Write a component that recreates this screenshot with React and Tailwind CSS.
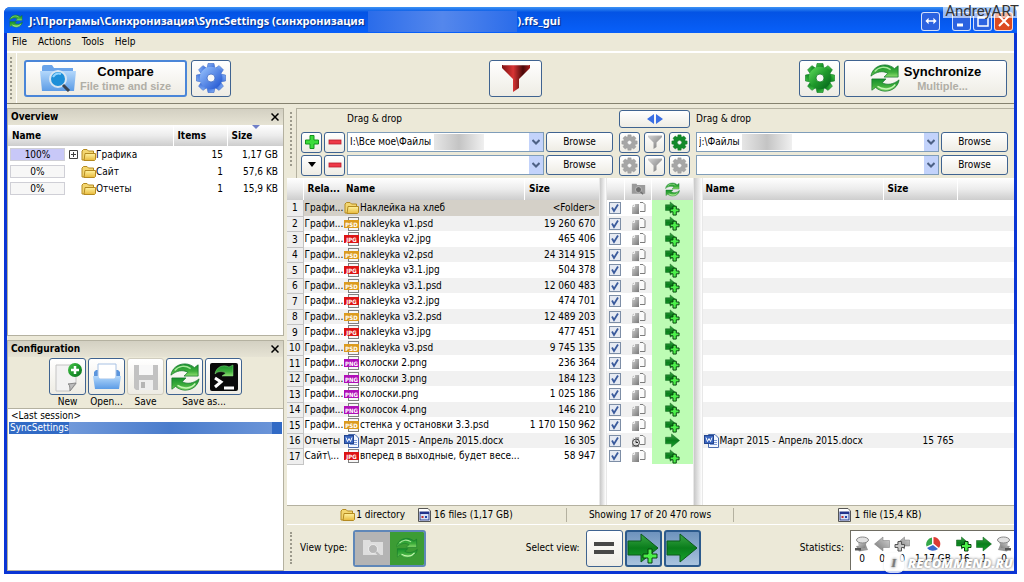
import { clsx } from 'clsx'

const FILES = [
  { rel: 'Графи...', kind: 'folder', name: 'Наклейка на хлеб', size: '<Folder>' },
  { rel: 'Графи...', kind: 'psd', name: 'nakleyka v1.psd', size: '19 260 670' },
  { rel: 'Графи...', kind: 'jpg', name: 'nakleyka v2.jpg', size: '465 406' },
  { rel: 'Графи...', kind: 'psd', name: 'nakleyka v2.psd', size: '24 314 915' },
  { rel: 'Графи...', kind: 'jpg', name: 'nakleyka v3.1.jpg', size: '504 378' },
  { rel: 'Графи...', kind: 'psd', name: 'nakleyka v3.1.psd', size: '12 060 483' },
  { rel: 'Графи...', kind: 'jpg', name: 'nakleyka v3.2.jpg', size: '474 701' },
  { rel: 'Графи...', kind: 'psd', name: 'nakleyka v3.2.psd', size: '12 489 203' },
  { rel: 'Графи...', kind: 'jpg', name: 'nakleyka v3.jpg', size: '477 451' },
  { rel: 'Графи...', kind: 'psd', name: 'nakleyka v3.psd', size: '9 745 135' },
  { rel: 'Графи...', kind: 'png', name: 'колоски 2.png', size: '236 364' },
  { rel: 'Графи...', kind: 'png', name: 'колоски 3.png', size: '184 123' },
  { rel: 'Графи...', kind: 'png', name: 'колоски.png', size: '1 025 186' },
  { rel: 'Графи...', kind: 'png', name: 'колосок 4.png', size: '146 210' },
  { rel: 'Графи...', kind: 'psd', name: 'стенка у остановки 3.3.psd', size: '1 170 150 962' },
  { rel: 'Отчеты', kind: 'doc', name: 'Март 2015 - Апрель 2015.docx', size: '16 305', right: '15 765' },
  { rel: 'Сайт\\...', kind: 'jpg', name: 'вперед в выходные, будет весе...', size: '58 947' },
]

const OVERVIEW = [
  { percent: '100%', name: 'Графика', items: 15, size: '1,17 GB', full: true },
  { percent: '0%', name: 'Сайт', items: 1, size: '57,6 KB' },
  { percent: '0%', name: 'Отчеты', items: 1, size: '15,9 KB' },
]

const BADGES = { psd: '#dc9b1e', jpg: '#dd1414', png: '#b010b8' }

const BTN = 'flex items-center justify-center rounded-[3px] border border-[#3f6390] bg-linear-to-b from-white to-[#eeece4]'
const HEAD = 'bg-linear-to-b from-white via-[#ececec] to-[#cdcdcd] font-bold text-black'

/* ---------- icons ---------- */

function Gradients() {
  return (
    <svg className="absolute size-0" aria-hidden="true">
      <defs>
        <linearGradient id="green" x1="0" y1="0" x2="1" y2="1">
          <stop offset="0" stopColor="#4cc84e" />
          <stop offset="0.5" stopColor="#1f9a2c" />
          <stop offset="1" stopColor="#0c7220" />
        </linearGradient>
        <linearGradient id="lime" x1="0" y1="0" x2="0" y2="1">
          <stop offset="0" stopColor="#16902c" />
          <stop offset="0.6" stopColor="#3fae3c" />
          <stop offset="1" stopColor="#8fe070" />
        </linearGradient>
        <linearGradient id="arrow" x1="0" y1="0" x2="0" y2="1">
          <stop offset="0" stopColor="#3ca746" />
          <stop offset="0.5" stopColor="#0a7d1c" />
          <stop offset="1" stopColor="#17a52c" />
        </linearGradient>
        <linearGradient id="blue" x1="0" y1="0" x2="1" y2="1">
          <stop offset="0" stopColor="#86b2f6" />
          <stop offset="1" stopColor="#2f62d6" />
        </linearGradient>
        <linearGradient id="grey" x1="0" y1="0" x2="1" y2="1">
          <stop offset="0" stopColor="#d2d2d2" />
          <stop offset="1" stopColor="#777777" />
        </linearGradient>
        <linearGradient id="red" x1="0" y1="0" x2="1" y2="0">
          <stop offset="0" stopColor="#7c1010" />
          <stop offset="0.4" stopColor="#d83434" />
          <stop offset="0.75" stopColor="#4a0808" />
          <stop offset="1" stopColor="#a81c1c" />
        </linearGradient>
        <linearGradient id="sky" x1="0" y1="0" x2="0" y2="1">
          <stop offset="0" stopColor="#b4d8fb" />
          <stop offset="1" stopColor="#5c9ce6" />
        </linearGradient>
        <linearGradient id="gold" x1="0" y1="0" x2="0" y2="1">
          <stop offset="0" stopColor="#fff3a0" />
          <stop offset="1" stopColor="#e8b93c" />
        </linearGradient>
      </defs>
    </svg>
  )
}

function SyncIcon({ className }) {
  return (
    <svg viewBox="0 0 32 32" className={className}>
      <g fill="url(#lime)" stroke="#12752a" strokeWidth="0.8" strokeLinejoin="round">
        <path d="M1 14C2 7 8 2 16 2C20 2 24 4 26 6L30 3V15H15L19 11C14 8 7 9 1 14Z" />
        <path d="M31 18C30 25 24 30 16 30C12 30 8 28 6 26L2 29V17H17L13 21C18 24 25 23 31 18Z" />
      </g>
      <path d="M5 9C9 4 16 3 22 7" fill="none" stroke="#a8e89a" strokeWidth="1.500" />
      <path d="M8 25C14 29 22 29 27 23" fill="none" stroke="#c5f5b4" strokeWidth="1.500" />
    </svg>
  )
}

function GearIcon({ fill, stroke, className }) {
  return (
    <svg viewBox="0 0 32 32" className={className}>
      <g fill={fill} stroke={stroke} strokeWidth="0.6">
        {[0, 45, 90, 135, 180, 225, 270, 315].map((deg) => (
          <path key={deg} d="M12 7L13 1.500H19L20 7Z" transform={`rotate(${deg} 16 16)`} />
        ))}
      </g>
      <circle cx="16" cy="16" r="7.500" fill="none" stroke={fill} strokeWidth="7.500" />
      <circle cx="16" cy="16" r="4" fill="#f8f8f8" stroke={stroke} strokeWidth="0.8" />
    </svg>
  )
}

function FunnelIcon({ fill, className }) {
  return (
    <svg viewBox="0 0 28 28" className={className}>
      <path d="M0 1H28V4L17 15V24L11 28V15L0 4Z" fill={fill} />
      <path d="M1 1.500H27" stroke="#ffffff" strokeOpacity="0.25" />
    </svg>
  )
}

function FolderIcon({ className }) {
  return (
    <svg viewBox="0 0 15 14" className={className}>
      <path d="M1 12V3L2.500 1.500H6L7.500 3H12.500V12Z" fill="#f3d670" stroke="#b48a20" />
      <path d="M3 12.500L4 5.500H14.500V11.500L13.500 12.500Z" fill="url(#gold)" stroke="#b48a20" />
    </svg>
  )
}

function CompareIcon({ className }) {
  return (
    <svg viewBox="0 0 36 28" className={className}>
      <path d="M2 27V3Q2 1 4 1H12L14 4H33V27Z" fill="#6aa4ea" />
      <path d="M0 7H36L34 27H2Z" fill="url(#sky)" />
      <circle cx="18" cy="15" r="8" fill="#1d8fd8" stroke="#d8e6f2" strokeWidth="2" />
      <path d="M13 13Q16 8 21 10" stroke="#8ed4ff" strokeWidth="2" fill="none" />
      <path d="M23 21L29 27" stroke="#3a4350" strokeWidth="3" />
    </svg>
  )
}

function ArrowIcon({ plus, small, flip, fill = 'url(#arrow)', stroke = '#0b5a18', className }) {
  return (
    <svg viewBox="0 0 32 32" className={className}>
      <g transform={flip ? 'translate(32 0) scale(-1 1)' : undefined}>
        {small ? (
          <path d="M1 8H11V2L25 14L11 26V20H1Z" fill={fill} stroke={stroke} strokeLinejoin="round" />
        ) : (
          <path d="M1 9H14V2L31 16L14 30V23H1Z" fill={fill} stroke={stroke} strokeLinejoin="round" />
        )}
        {plus && (
          <path
            d={small ? 'M17 11H24V17H30V23H24V30H17V23H11V17H17Z' : 'M21 17H25V22H30V26H25V31H21V26H16V22H21Z'}
            fill={flip ? '#c8c8c8' : '#4df04a'}
            stroke={flip ? '#555555' : '#04420c'}
            strokeWidth={small ? 2 : 1}
          />
        )}
      </g>
    </svg>
  )
}

function FileIcon({ kind }) {
  if (kind === 'folder') return <FolderIcon className="h-[14px] w-[15px] shrink-0" />
  if (kind === 'doc') {
    return (
      <svg viewBox="0 0 15 14" className="h-[14px] w-[15px] shrink-0">
        <path d="M4.500 .5H11L14.500 4V13.500H4.500Z" fill="#f4f8ff" stroke="#4a6cae" />
        <path d="M9 6.500H13M9 8.500H13M6 10.500H13" stroke="#7d9ad4" />
        <rect x="0.500" y="1.500" width="9" height="8" fill="#3a66c0" stroke="#24458e" />
        <path d="M2 3.500L3.500 7.500L5 4.500L6.500 7.500L8 3.500" fill="none" stroke="#ffffff" />
      </svg>
    )
  }
  return (
    <svg viewBox="0 0 15 14" className="h-[14px] w-[15px] shrink-0">
      <rect x="4.500" y="0.500" width="10" height="13" fill="#f6f6f6" stroke="#808080" />
      <rect x="0" y="3" width="15" height="8" fill={BADGES[kind]} />
      <text x="7.500" y="9.500" textAnchor="middle" fontSize="6" fontWeight="bold" fill="#ffffff">
        {kind.toUpperCase()}
      </text>
    </svg>
  )
}

function CategoryIcon({ newer }) {
  return (
    <svg viewBox="0 0 15 14" className="mx-auto block h-[14px] w-[15px]">
      <path d="M9 1.500H12L14 3.500V10.500H9" fill="#fafafa" stroke="#7c7c7c" />
      <path d="M1 5L3.500 3H8V13H1Z" fill="url(#grey)" />
      <path d="M1.500 5.500H3.500V3" fill="none" stroke="#f0f0f0" />
      {newer && <circle cx="5" cy="8.500" r="3.500" fill="#d8d8d8" stroke="#444444" />}
      {newer && <path d="M5 6.500V8.500H7" stroke="#222222" fill="none" />}
    </svg>
  )
}

function CameraIcon({ fill, lens, className }) {
  return (
    <svg viewBox="0 0 22 18" className={className}>
      <path d="M1 4V1H8L9 3H21V16H1Z" fill={fill} />
      <circle cx="11" cy="10" r="4.500" fill={lens} stroke="#ffffff" strokeOpacity="0.6" />
      <path d="M14 13L18 17" stroke={lens} strokeWidth="2" />
    </svg>
  )
}

function CalendarIcon() {
  return (
    <svg viewBox="0 0 13 14" className="h-[14px] w-[13px] shrink-0">
      <path d="M.5 .5H10L12.500 3V13.500H.5Z" fill="#ffffff" stroke="#555555" />
      <rect x="2" y="4" width="9" height="8" fill="#d7e1f5" stroke="#2b3f8c" />
      <rect x="2" y="4" width="9" height="2" fill="#22338c" />
      <rect x="3.500" y="8" width="2" height="2" fill="#c23030" />
      <rect x="7" y="8" width="2" height="2" fill="#2244aa" />
    </svg>
  )
}

function NewIcon() {
  return (
    <svg viewBox="0 0 30 30" className="size-[30px]">
      <path d="M3 3H23V22L17 29H3Z" fill="#f2f2f2" stroke="#c4c4c4" />
      <path d="M23 21L17 29Q17 22 15 22Z" fill="#bdbdbd" stroke="#888888" />
      <circle cx="22" cy="8" r="7" fill="url(#green)" />
      <path d="M22 4V12M18 8H26" stroke="#ffffff" strokeWidth="2.500" />
    </svg>
  )
}

function OpenIcon() {
  return (
    <svg viewBox="0 0 30 30" className="size-[30px]">
      <path d="M2 10L4 8H26L28 10V15H2Z" fill="#5b95dd" />
      <path d="M6 2H24V17H6Z" fill="#ffffff" stroke="#a8c2e4" />
      <path d="M1 14H6L8 17H22L24 14H29L27 27H3Z" fill="url(#sky)" />
    </svg>
  )
}

function SaveIcon() {
  return (
    <svg viewBox="0 0 30 30" className="size-[30px]">
      <path d="M3 3H27V28H5L3 26Z" fill="#c2c2c2" />
      <rect x="8" y="3" width="14" height="10" fill="#f8f8f8" />
      <rect x="8" y="18" width="14" height="10" fill="#eeeeee" />
      <rect x="10" y="20" width="4" height="6" fill="#b5b5b5" />
    </svg>
  )
}

function BatchIcon() {
  return (
    <svg viewBox="0 0 30 30" className="size-[30px]">
      <rect x="1" y="1" width="28" height="28" rx="2" fill="#0a0a0a" />
      <path d="M6 12C7 5 14 2 20 5L24 3V14H13L17 11C13 9 9 9 6 12Z" fill="url(#lime)" stroke="#7fd47a" strokeWidth="0.500" />
      <path d="M6 16L12 20L6 25" fill="none" stroke="#ffffff" strokeWidth="3" />
      <path d="M15 26H25" stroke="#ffffff" strokeWidth="3" />
    </svg>
  )
}

function TrashIcon({ flip }) {
  return (
    <svg viewBox="0 0 16 16" className={clsx('size-4', flip && '-scale-x-100')}>
      <path d="M2 10L12 9L14 14L5 15.500Z" fill="#9a9a9a" />
      <path d="M1 12H7V14.500H1Z" fill="#555555" />
      <path d="M4 6L13 5L11 12H5Z" fill="url(#grey)" />
      <ellipse cx="8.500" cy="4" rx="6" ry="3" fill="#e2e2e2" stroke="#8a8a8a" />
    </svg>
  )
}

function PieIcon() {
  return (
    <svg viewBox="0 0 16 16" className="size-4">
      <path d="M8.500 7.500V1A7 7 0 0 1 14 12Z" fill="#dc3a34" />
      <path d="M8 9L13 13A7.500 7 0 0 1 2 12Z" fill="#3a68cc" />
      <path d="M7 8L1.500 10.500A7 7 0 0 1 7 1.500Z" fill="#36a84a" />
    </svg>
  )
}

/* ---------- window parts ---------- */

function TitleBar() {
  const cap = 'flex size-[19px] items-center justify-center rounded-[3px] border border-white/80'
  return (
    <header className="flex h-[26px] shrink-0 items-center rounded-t-md bg-linear-to-b from-[#3d93f5] via-[#0453e4] via-20% to-[#0860fa] pt-0.5 pr-1 pl-[5px]">
      <SyncIcon className="mr-1.5 size-[14px]" />
      <h1 className="flex items-center font-[Noto_Sans] text-[11px] font-bold whitespace-pre text-white [text-shadow:1px_1px_1px_#0a2a80]">
        J:\Програмы\Синхронизация\SyncSettings (синхронизация
        <span className="ml-1 h-[21px] w-[149px] bg-linear-to-r from-[#2a6cea] via-[#5487ec] to-[#2a6cea]" />
        ).ffs_gui
      </h1>
      <div className="ml-auto flex gap-0.5">
        <button type="button" aria-label="Move" className={clsx(cap, 'mr-2.5 bg-[#2b62e0]')}>
          <svg viewBox="0 0 14 10" className="h-[8px] w-[12px]">
            <path d="M0 5L4 1V4H10V1L14 5L10 9V6H4V9Z" fill="#ffffff" />
          </svg>
        </button>
        <button type="button" aria-label="Minimize" className={clsx(cap, 'bg-[#2b62e0]')}>
          <svg viewBox="0 0 14 14" className="size-[14px]"><path d="M2 11H8" stroke="#ffffff" strokeWidth="3" /></svg>
        </button>
        <button type="button" aria-label="Maximize" className={clsx(cap, 'bg-[#2b62e0]')}>
          <svg viewBox="0 0 14 14" className="size-[14px]"><path d="M2 3H12V12H2ZM2 4H12" fill="none" stroke="#ffffff" strokeWidth="1.500" /></svg>
        </button>
        <button type="button" aria-label="Close" className={clsx(cap, 'bg-[#dc4a20]')}>
          <svg viewBox="0 0 14 14" className="size-[14px]"><path d="M2 2L12 12M12 2L2 12" stroke="#ffffff" strokeWidth="2" /></svg>
        </button>
      </div>
    </header>
  )
}

function Grip({ className }) {
  return <div className={clsx('w-0 shrink-0 border-l-2 border-dotted border-[#9c9a8c]', className)} />
}

function Toolbar() {
  return (
    <div className="flex h-[53px] shrink-0 border-t-2 border-b border-t-white border-b-[#85826f] pl-[3px]">
      <Grip className="my-1" />
      <div className="ml-1 grid flex-1 grid-cols-[1fr_auto_1fr] items-center border-l border-white px-[7px]">
        <div className="flex gap-1">
          <button type="button" className={clsx(BTN, 'h-[37px] w-[163px] gap-1 border-2 border-[#4a86d8]')}>
            <CompareIcon className="h-[28px] w-[36px]" />
            <span className="flex flex-col items-center font-[Liberation_Sans] font-bold">
              <span className="text-[13px] leading-4">Compare</span>
              <span className="text-[11px] leading-3 text-[#b0aea6]">File time and size</span>
            </span>
          </button>
          <button type="button" aria-label="Comparison settings" className={clsx(BTN, 'h-[37px] w-[40px]')}>
            <GearIcon fill="url(#blue)" stroke="#3a68c8" className="size-[32px]" />
          </button>
        </div>
        <button type="button" aria-label="Filter" className={clsx(BTN, 'h-[37px] w-[53px]')}>
          <FunnelIcon fill="url(#red)" className="size-[28px]" />
        </button>
        <div className="flex justify-end gap-1">
          <button type="button" aria-label="Synchronization settings" className={clsx(BTN, 'h-[37px] w-[41px]')}>
            <GearIcon fill="url(#green)" stroke="#0d7a20" className="size-[32px]" />
          </button>
          <button type="button" className={clsx(BTN, 'h-[37px] w-[163px] gap-1')}>
            <SyncIcon className="size-[30px]" />
            <span className="flex flex-col items-center font-[Liberation_Sans] font-bold">
              <span className="text-[13px] leading-4">Synchronize</span>
              <span className="text-[11px] leading-3 text-[#b0aea6]">Multiple...</span>
            </span>
          </button>
        </div>
      </div>
    </div>
  )
}

function Caption({ children }) {
  return (
    <div className="flex h-4 shrink-0 items-center justify-between bg-linear-to-b from-[#d3d0c2] to-[#e6e3d4] pr-1 pl-[3px]">
      <h2 className="font-bold">{children}</h2>
      <button type="button" aria-label={`Close ${children}`}>
        <svg viewBox="0 0 8 8" className="size-2"><path d="M.5 .5L7.500 7.500M7.500 .5L.5 7.500" stroke="#000000" strokeWidth="1.500" /></svg>
      </button>
    </div>
  )
}

function Overview() {
  return (
    <section className="flex h-[228px] shrink-0 flex-col border border-[#b4b1a0] bg-white">
      <Caption>Overview</Caption>
      <table className="w-full table-fixed border-collapse">
        <thead>
          <tr className={clsx(HEAD, 'h-[21px] text-left')}>
            <th className="pl-1">Name</th>
            <th className="w-[54px] border-l border-white pl-1">Items</th>
            <th className="relative w-[56px] border-l border-white pl-1">
              Size
              <svg viewBox="0 0 8 4" className="absolute top-0 left-6 h-1 w-2"><path d="M0 0H8L4 4Z" fill="#6f7fc8" /></svg>
            </th>
          </tr>
        </thead>
        <tbody>
          {OVERVIEW.map((row) => (
            <tr key={row.name} className="h-[17px]">
              <td>
                <div className="flex items-center pl-0.5">
                  <span className={clsx('h-[13px] w-[55px] border border-[#cfcfd6] text-center leading-[11px]', row.full ? 'bg-[#c8c8f8]' : 'bg-[#f7f7f7]')}>
                    {row.percent}
                  </span>
                  <span className="mx-[3px] flex size-[10px] items-center justify-center">
                    {row.full && (
                      <svg viewBox="0 0 9 9" className="size-[9px]"><path d="M.5 .5H8.500V8.500H.5ZM2 4.500H7M4.500 2V7" fill="none" stroke="#404040" /></svg>
                    )}
                  </span>
                  <FolderIcon className="h-[14px] w-[15px]" />
                  {row.name}
                </div>
              </td>
              <td className="pr-1 text-right">{row.items}</td>
              <td className="pr-[5px] text-right">{row.size}</td>
            </tr>
          ))}
        </tbody>
      </table>
    </section>
  )
}

function Configuration() {
  const tools = [
    { label: 'New', buttons: [['New', <NewIcon />]] },
    { label: 'Open...', buttons: [['Open', <OpenIcon />]] },
    { label: 'Save', buttons: [['Save', <SaveIcon />]], disabled: true },
    { label: 'Save as...', buttons: [['Save as sync', <SyncIcon className="size-[30px]" />], ['Save as batch', <BatchIcon />]] },
  ]
  return (
    <section className="flex min-h-0 flex-1 flex-col border border-[#b4b1a0]">
      <Caption>Configuration</Caption>
      <div className="flex justify-center gap-0.5 pt-px">
        {tools.map((tool) => (
          <div key={tool.label} className="flex flex-col items-center">
            <div className="flex gap-0.5">
              {tool.buttons.map(([name, icon]) => (
                <button
                  key={name}
                  type="button"
                  aria-label={name}
                  disabled={tool.disabled}
                  className={clsx(BTN, 'size-[37px]', tool.disabled && 'border-[#d0cdbf]')}
                >
                  {icon}
                </button>
              ))}
            </div>
            <span className="leading-[13px]">{tool.label}</span>
          </div>
        ))}
      </div>
      <ul className="flex-1 border-t border-[#b4b1a0] bg-white px-px pt-px">
        <li className="h-3 pl-0.5 leading-3">&lt;Last session&gt;</li>
        <li className="flex h-3 items-center bg-[#316ac5] pl-px leading-3 text-white">
          SyncSettings
          <span className="mr-2.5 h-3 flex-1 bg-linear-to-r from-[#7099da] via-[#4a7ccc] to-[#6a94d8]" />
        </li>
      </ul>
    </section>
  )
}

function FolderSelect({ id, label, value }) {
  return (
    <div className="relative min-w-0 flex-1">
      <select
        id={id}
        aria-label={label}
        defaultValue={value}
        className="h-5 w-full appearance-none border border-[#7f9db9] bg-white pl-0.5 leading-4"
      >
        <option value={value}>{value}</option>
      </select>
      {value && (
        <span className={clsx('absolute top-0.5 h-4 w-[50px] bg-linear-to-r from-[#e6e6e6] via-[#c4c4c4] to-[#f0f0f0]', id === 'left1' ? 'left-[87px]' : 'left-[46px]')} />
      )}
      <span className="pointer-events-none absolute top-px right-px flex h-[18px] w-[14px] items-center justify-center bg-[#c3d3fb]">
        <svg viewBox="0 0 8 6" className="h-1.5 w-2"><path d="M.5 1L4 4.500L7.500 1" fill="none" stroke="#4d6185" strokeWidth="2" /></svg>
      </span>
    </div>
  )
}

function Browse() {
  return (
    <button type="button" className={clsx(BTN, 'h-5 w-[67px]')}>Browse</button>
  )
}

function Minus() {
  return (
    <svg viewBox="0 0 14 14" className="size-[14px]"><rect x="1" y="5" width="12" height="4" fill="#ee3a48" stroke="#b81c2c" strokeWidth="0.800" /></svg>
  )
}

function FolderPairs() {
  const small = clsx(BTN, 'size-[21px]')
  return (
    <div className="flex h-[70px] shrink-0 pl-[3px]">
      <Grip className="mt-1 mb-3" />
      <div className="ml-1 grid flex-1 grid-cols-[1fr_71px_1fr] grid-rows-[20px_20px_20px] items-center gap-x-1.5 gap-y-[3px] border-t border-l border-[#b4b1a0] pr-1.5 pl-1">
        <label htmlFor="left1" className="pl-[46px]">Drag &amp; drop</label>
        <button type="button" aria-label="Swap sides" className={clsx(BTN, 'h-[18px] w-full')}>
          <svg viewBox="0 0 16 10" className="h-[10px] w-4"><path d="M7 0V10L0 5ZM9 0V10L16 5Z" fill="#3b6fe4" /></svg>
        </button>
        <label htmlFor="right1">Drag &amp; drop</label>

        <div className="flex items-center gap-0.5">
          <button type="button" aria-label="Add folder pair" className={small}>
            <svg viewBox="0 0 14 14" className="size-[14px]"><path d="M5 .5H9V5H13.500V9H9V13.500H5V9H.5V5H5Z" fill="#3ddc3a" stroke="#15931c" /></svg>
          </button>
          <button type="button" aria-label="Remove folder pair 1" className={small}><Minus /></button>
          <FolderSelect id="left1" value={'I:\\Все мое\\Файлы'} />
          <Browse />
        </div>
        <div className="flex justify-between">
          <button type="button" aria-label="Local comparison settings" className={small}><GearIcon fill="#a6a6a6" stroke="#8a8a8a" className="size-[17px]" /></button>
          <button type="button" aria-label="Local filter" className={small}><FunnelIcon fill="url(#grey)" className="size-[14px]" /></button>
          <button type="button" aria-label="Local synchronization settings" className={small}><GearIcon fill="#138a2a" stroke="#0d6a1c" className="size-[17px]" /></button>
        </div>
        <div className="flex items-center gap-0.5">
          <FolderSelect id="right1" value={'j:\\Файлы'} />
          <Browse />
        </div>

        <div className="flex items-center gap-0.5">
          <button type="button" aria-label="More" className={small}>
            <svg viewBox="0 0 10 6" className="h-1.5 w-2.5"><path d="M1 0H9L5 5Z" fill="#000000" /></svg>
          </button>
          <button type="button" aria-label="Remove folder pair 2" className={small}><Minus /></button>
          <FolderSelect id="left2" label="Left folder 2" value="" />
          <Browse />
        </div>
        <div className="flex justify-between">
          <button type="button" aria-label="Pair 2 comparison settings" className={small}><GearIcon fill="#a6a6a6" stroke="#8a8a8a" className="size-[17px]" /></button>
          <button type="button" aria-label="Pair 2 filter" className={small}><FunnelIcon fill="url(#grey)" className="size-[14px]" /></button>
          <button type="button" aria-label="Pair 2 synchronization settings" className={small}><GearIcon fill="#a6a6a6" stroke="#8a8a8a" className="size-[17px]" /></button>
        </div>
        <div className="flex items-center gap-0.5">
          <FolderSelect id="right2" label="Right folder 2" value="" />
          <Browse />
        </div>
      </div>
    </div>
  )
}

function LeftGrid() {
  return (
    <table className="w-full table-fixed border-collapse whitespace-nowrap">
      <thead>
        <tr className={clsx(HEAD, 'h-[22px] text-left')}>
          <th className="w-[16px]" aria-label="Row" />
          <th className="w-[39px] border-l border-white pl-1">Rela...</th>
          <th className="pl-1">Name</th>
          <th className="w-[74px] border-l border-white pl-1">Size</th>
        </tr>
      </thead>
      <tbody>
        {FILES.map((file, i) => (
          <tr key={file.name} className={clsx('odd:h-4 even:h-[15px]', i === 0 ? 'bg-[#d4d0c8]' : 'even:bg-[#f1f1f1]')}>
            <td className="border-r border-b border-[#c4c4c4] bg-[#eeeeee] text-center leading-[13px]">{i + 1}</td>
            <td className="pl-px leading-[14px]">{file.rel}</td>
            <td>
              <div className="flex items-center gap-px pl-0.5 leading-[14px]">
                <FileIcon kind={file.kind} />
                {file.name}
              </div>
            </td>
            <td className="pr-[3px] text-right leading-[14px]">{file.size}</td>
          </tr>
        ))}
      </tbody>
    </table>
  )
}

function MiddleGrid() {
  return (
    <table className="w-full table-fixed border-collapse">
      <thead>
        <tr className={clsx(HEAD, 'h-[22px]')}>
          <th className="w-[18px]" aria-label="Selected" />
          <th aria-label="Category" className="border-l border-white">
            <CameraIcon fill="#9a9a9a" lens="#6f6f6f" className="mx-auto h-[12px] w-[15px]" />
          </th>
          <th aria-label="Action" className="w-[41px] border-l border-white">
            <SyncIcon className="mx-auto size-[15px]" />
          </th>
        </tr>
      </thead>
      <tbody>
        {FILES.map((file) => (
          <tr key={file.name} className="odd:h-4 even:h-[15px] even:bg-[#f1f1f1]">
            <td>
              <div className="ml-0.5 grid size-3">
                <input
                  type="checkbox"
                  defaultChecked
                  aria-label={file.name}
                  className="col-start-1 row-start-1 size-3 appearance-none border border-[#7d8ea6] bg-[#e6eaf2]"
                />
                <svg viewBox="0 0 12 12" className="pointer-events-none col-start-1 row-start-1 size-3">
                  <path d="M3 5.500L5 9L9 2.500" fill="none" stroke="#3a5a9c" strokeWidth="1.800" />
                </svg>
              </div>
            </td>
            <td><CategoryIcon newer={Boolean(file.right)} /></td>
            <td className="bg-[#bdfcb4]">
              <ArrowIcon plus={!file.right} small={!file.right} className="mx-auto block size-[15px]" />
            </td>
          </tr>
        ))}
      </tbody>
    </table>
  )
}

function RightGrid() {
  return (
    <table className="w-full table-fixed border-collapse whitespace-nowrap">
      <thead>
        <tr className={clsx(HEAD, 'h-[22px] text-left')}>
          <th className="pl-[3px]">Name</th>
          <th className="w-[74px] border-l border-white pl-1">Size</th>
          <th className="w-[57px] border-l border-white" aria-label="More" />
        </tr>
      </thead>
      <tbody>
        {FILES.map((file) => (
          <tr key={file.name} className="odd:h-4 even:h-[15px] even:bg-[#f1f1f1]">
            <td>
              {file.right && (
                <div className="flex items-center gap-px pl-px leading-[14px]">
                  <FileIcon kind={file.kind} />
                  {file.name}
                </div>
              )}
            </td>
            <td className="pr-[3px] text-right leading-[14px]">{file.right}</td>
            <td />
          </tr>
        ))}
      </tbody>
    </table>
  )
}

function StatusBar() {
  return (
    <div className="grid h-5 shrink-0 grid-cols-[279px_168px_1fr] items-center border-t border-b border-t-[#b4b1a0] border-b-white">
      <div className="flex items-center justify-center gap-px">
        <FolderIcon className="h-[14px] w-[15px]" />
        <span className="mr-3">1 directory</span>
        <CalendarIcon />
        <span className="ml-0.5">16 files (1,17 GB)</span>
      </div>
      <div className="border-x border-[#b4b1a0] text-center">Showing 17 of 20 470 rows</div>
      <div className="flex items-center justify-center gap-[3px] pl-3">
        <CalendarIcon />
        1 file (15,4 KB)
      </div>
    </div>
  )
}

function BottomBar() {
  const stats = [
    { icon: <TrashIcon />, value: '0' },
    { icon: <ArrowIcon flip fill="url(#grey)" stroke="#777777" className="size-4" />, value: '0' },
    { icon: <ArrowIcon flip plus small fill="url(#grey)" stroke="#777777" className="size-4" />, value: '0' },
    { icon: <PieIcon />, value: '1,17 GB' },
    { icon: <ArrowIcon plus small className="size-4" />, value: '16' },
    { icon: <ArrowIcon className="size-4" />, value: '1' },
    { icon: <TrashIcon flip />, value: '0' },
  ]
  const active = 'flex size-[37px] items-center justify-center rounded-[3px] border-2 border-[#2c5a8c] bg-linear-to-b from-[#6e93bd] to-[#a9c3de]'
  return (
    <div className="flex h-[46px] shrink-0 items-center pl-[3px]">
      <Grip className="h-8" />
      <span className="ml-2">View type:</span>
      <button type="button" aria-label="View type" className="ml-1.5 flex h-[37px] w-[73px] overflow-hidden rounded-[3px] border-2 border-[#5f87b8]">
        <span className="flex h-full flex-1 items-center justify-center bg-[#b4b4b4]">
          <CameraIcon fill="#dedede" lens="#b8b8b8" className="h-[18px] w-[22px]" />
        </span>
        <span className="flex h-full flex-1 items-center justify-center bg-[#3c9c34]">
          <SyncIcon className="size-[22px]" />
        </span>
      </button>
      <div className="mx-auto flex items-center gap-0.5">
        <span className="mr-1">Select view:</span>
        <button type="button" aria-label="Equal" className={clsx(BTN, 'size-[37px]')}>
          <svg viewBox="0 0 20 14" className="h-[14px] w-5"><path d="M0 3H20M0 11H20" stroke="#484848" strokeWidth="4" /></svg>
        </button>
        <button type="button" aria-label="Create on right" className={active}><ArrowIcon plus className="size-[32px]" /></button>
        <button type="button" aria-label="Update right" className={active}><ArrowIcon className="size-[32px]" /></button>
      </div>
      <span className="mr-1.5">Statistics:</span>
      <div className="mt-1 flex h-[40px] w-[164px] items-center border-t border-l border-[#6f6d62] bg-white pl-px">
        {stats.map((stat, i) => (
          <div key={i} className={clsx('flex flex-col items-center', i === 3 ? 'w-[42px]' : 'w-5')}>
            {stat.icon}
            <span className="leading-[14px]">{stat.value}</span>
          </div>
        ))}
      </div>
    </div>
  )
}

export default function App() {
  return (
    <div className="relative h-screen bg-white pt-[7px] pr-[7px] pb-2 pl-1 font-['DejaVu_Sans_Condensed','Noto_Sans',sans-serif] text-[10px] leading-[14px] text-black">
      <Gradients />
      <div className="flex h-full flex-col rounded-t-md bg-[#0a35d4]">
        <TitleBar />
        <main className="mx-[3px] mb-[3px] flex min-h-0 flex-1 flex-col bg-[#ece9d8]">
          <nav className="flex h-[18px] shrink-0 items-center gap-[11px] pl-[5px]">
            <button type="button">File</button>
            <button type="button">Actions</button>
            <button type="button">Tools</button>
            <button type="button">Help</button>
          </nav>
          <Toolbar />
          <div className="flex min-h-0 flex-1 pt-1">
            <aside className="flex w-[277px] shrink-0 flex-col gap-1">
              <Overview />
              <Configuration />
            </aside>
            <div className="flex min-w-0 flex-1 flex-col pl-[3px]">
              <FolderPairs />
              <div className="grid min-h-0 flex-1 grid-cols-[1fr_8px_86px_10px_1fr] overflow-hidden bg-white">
                <div><LeftGrid /></div>
                <div className="border-x border-[#e8e8e8] bg-linear-to-r from-[#c8c8c8] to-white" />
                <div><MiddleGrid /></div>
                <div className="border-x border-[#e8e8e8] bg-linear-to-r from-[#c8c8c8] to-white" />
                <div><RightGrid /></div>
              </div>
              <StatusBar />
              <BottomBar />
            </div>
          </div>
        </main>
      </div>
      <div className="absolute top-1 right-[3px] bg-white/60 px-0.5 font-[Roboto] text-[15px] leading-[14px] text-[#333333]">
        AndreyART
      </div>
      <div className="absolute right-[11px] bottom-[9px] flex items-center gap-1 font-[Open_Sans] text-[13px] leading-5 font-extrabold text-white italic [text-shadow:0_0_3px_#555555]">
        <span className="flex h-5 w-5 items-center justify-center rounded-md bg-white/80 font-[Liberation_Serif] text-[#7a7a7a] shadow">I</span>
        RECOMMEND.RU
      </div>
    </div>
  )
}
